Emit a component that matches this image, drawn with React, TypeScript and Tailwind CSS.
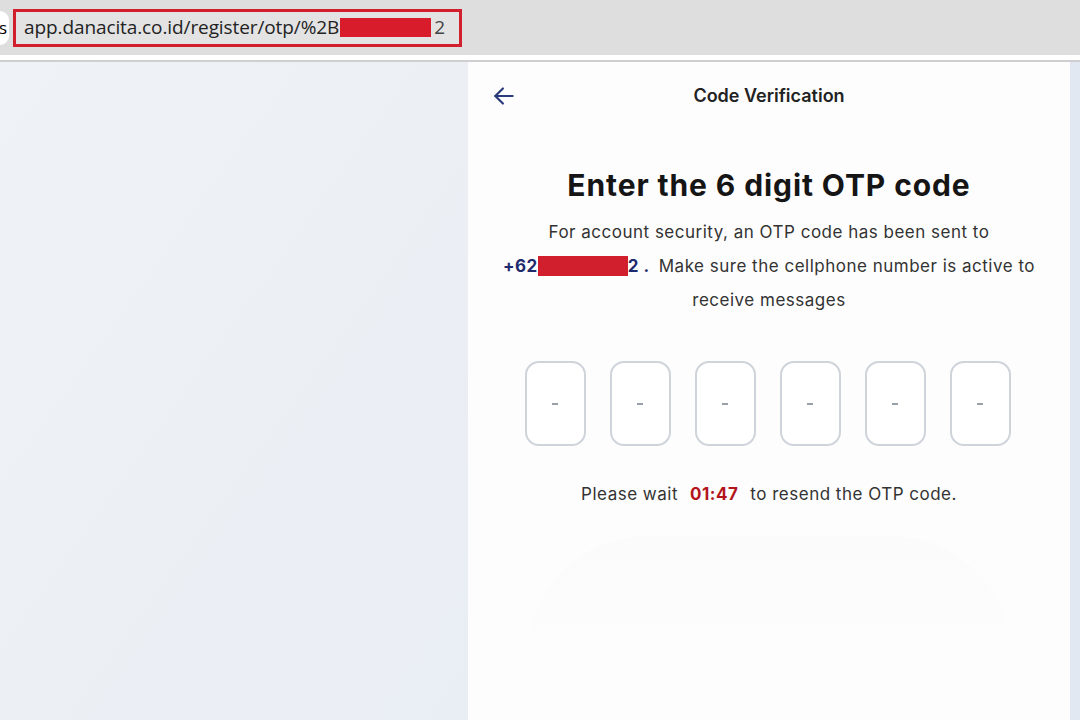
export default function App() {
  const boxes = [0, 1, 2, 3, 4, 5];

  return (
    <div className="w-[1080px] h-[720px] overflow-hidden flex flex-col bg-white" style={{ fontFamily: 'Inter, "Noto Sans", sans-serif' }}>
      {/* Browser address bar */}
      <div className="h-[55px] bg-[#dedede] flex items-center shrink-0">
        <div className="w-[9px] h-[34px] bg-white rounded-r-full flex items-center justify-end overflow-hidden">
          <span className="text-[17px] text-black leading-none mr-[2px]" style={{ fontFamily: '"Open Sans", sans-serif' }}>s</span>
        </div>
        <div className="ml-[4px] w-[449px] h-[38px] border-[3px] border-[#d21f2e] bg-[#e3e3e3] flex items-center pl-[8px]">
          <span className="text-[19px] text-[#222] tracking-[-0.1px]" style={{ fontFamily: '"Open Sans", sans-serif' }}>app.danacita.co.id/register/otp/%2B</span>
          <span className="w-[91px] h-[19px] bg-[#d91c2b] ml-[1px]" />
          <span className="text-[19px] text-[#444] ml-[3px]" style={{ fontFamily: '"Open Sans", sans-serif' }}>2</span>
        </div>
      </div>
      <div className="h-[5px] bg-white shrink-0" />
      <div className="h-[2px] bg-[#cfcfcf] shrink-0" />

      {/* Page */}
      <div className="flex flex-1 min-h-0">
        <div className="w-[468px] bg-gradient-to-br from-[#eff3f8] via-[#ecf0f5] to-[#e9edf4]" />
        <div className="w-[602px] bg-[#fdfdfd] flex flex-col items-center">
          {/* Header */}
          <div className="w-full h-[64px] flex items-center relative">
            <svg className="absolute left-[23px] top-[21px]" width="26" height="26" viewBox="0 0 24 24" fill="none" stroke="#2b3a7a" strokeWidth="2" strokeLinecap="round" strokeLinejoin="round">
              <path d="M20 12H4" />
              <path d="M11 5l-7 7 7 7" />
            </svg>
            <div className="w-full text-center text-[18px] font-semibold text-[#222] mt-[3px]">Code Verification</div>
          </div>

          <h1 className="mt-[42px] text-[30px] font-bold text-[#151515] leading-[34px] tracking-[0.9px]">Enter the 6 digit OTP code</h1>

          <div className="mt-[13px] w-[580px] text-center text-[17px] text-[#333] leading-[34px] tracking-[0.5px]">
            <div>For account security, an OTP code has been sent to</div>
            <div className="flex items-center justify-center">
              <span className="font-bold text-[#1d2b6e]">+62</span>
              <span className="inline-block w-[90px] h-[20px] bg-[#d21f2e]" />
              <span className="font-bold text-[#1d2b6e]">2 .</span>
              <span className="ml-[9px]">Make sure the cellphone number is active to</span>
            </div>
            <div>receive messages</div>
          </div>

          {/* OTP boxes */}
          <div className="mt-[44px] flex gap-[24px] mr-[3px]">
            {boxes.map((b) => (
              <div key={b} className="w-[61px] h-[85px] border-2 border-[#cfd4db] rounded-[14px] bg-white flex items-center justify-center">
                <span className="w-[6px] h-[2px] bg-[#9aa0a8]" />
              </div>
            ))}
          </div>

          <div className="mt-[36px] text-[17px] text-[#333] tracking-[0.5px] flex items-center">
            <span>Please wait</span>
            <span className="ml-[12px] mr-[12px] font-bold text-[#b3141c]">01:47</span>
            <span>to resend the OTP code.</span>
          </div>

          {/* faint card below */}
          <div className="mt-[28px] w-[484px] h-[160px] rounded-t-[120px] bg-gradient-to-b from-[#fbfbfb] to-[#fdfdfd]" />
        </div>
        <div className="flex-1 bg-[#e2e8f1]" />
      </div>
    </div>
  );
}
